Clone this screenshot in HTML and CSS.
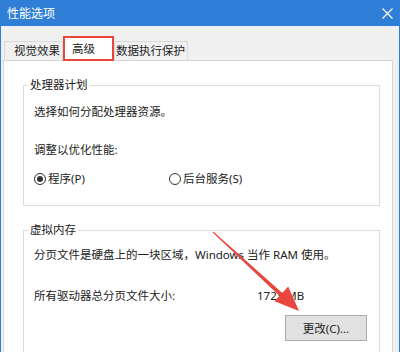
FILE: index.html
```html
<!DOCTYPE html>
<html lang="zh-CN">
<head>
    <meta charset="UTF-8">
    <meta name="viewport" content="width=device-width, initial-scale=1.0">
    <title>性能选项</title>
    <link rel="stylesheet" href="styles.css">
</head>
<body>
    <div class="window">
        <div class="titlebar">
            <span class="title">性能选项</span>
            <svg class="close" width="11" height="11" viewBox="0 0 11 11">
                <path d="M0.5 0.5 L10.5 10.5 M10.5 0.5 L0.5 10.5" stroke="#fff" stroke-width="1.2" fill="none"/>
            </svg>
        </div>
        <div class="content">
            <div class="tabs">
                <div class="tab tab-first">视觉效果</div>
                <div class="tab active">高级</div>
                <div class="tab tab-last">数据执行保护</div>
            </div>
            <div class="panel">
                <fieldset class="group group-cpu">
                    <legend>处理器计划</legend>
                    <p class="line desc">选择如何分配处理器资源。</p>
                    <p class="line adjust">调整以优化性能:</p>
                    <div class="line radios">
                        <label class="radio"><span class="dot checked"></span>程序(P)</label>
                        <label class="radio"><span class="dot"></span>后台服务(S)</label>
                    </div>
                </fieldset>
                <fieldset class="group group-mem">
                    <legend>虚拟内存</legend>
                    <p class="line desc-mem">分页文件是硬盘上的一块区域，Windows 当作 RAM 使用。</p>
                    <div class="line size-row">
                        <span>所有驱动器总分页文件大小:</span>
                        <span>1723 MB</span>
                    </div>
                    <div class="actions">
                        <button>更改(C)...</button>
                    </div>
                </fieldset>
            </div>
        </div>
        <svg class="arrow" width="400" height="352" viewBox="0 0 400 352">
            <polygon points="212.7,232.4 213.3,231.6 283.4,293.9 280.6,297.1" fill="#e8463e"/>
            <polygon points="299,311 274.6,301.2 288.2,286.4" fill="#e8463e"/>
        </svg>
    </div>
</body>
</html>
```

FILE: styles.css
```css
body {
    margin: 0;
    font-family: "Noto Sans", "Noto Sans CJK SC", sans-serif;
    font-size: 11.5px;
    color: #222;
}
.window {
    position: relative;
    width: 400px;
    height: 352px;
    box-sizing: border-box;
    border-left: 1px solid #2f7fd6;
    border-right: 1px solid #2f7fd6;
    background-color: #f0f0f0;
    overflow: hidden;
}
.titlebar {
    height: 26px;
    display: flex;
    align-items: center;
    justify-content: space-between;
    padding: 0 6px 0 6px;
    background-color: #2f7fd6;
    color: white;
    font-size: 12px;
}
.close {
    margin-top: 1px;
}
.content {
    padding: 10px 6px 0 2px;
}
.tabs {
    display: flex;
    align-items: flex-start;
    margin-left: 1px;
    position: relative;
    z-index: 1;
}
.tab {
    margin-top: 5px;
    height: 19px;
    box-sizing: border-box;
    border: 1px solid #dadada;
    border-bottom: none;
    line-height: 18px;
    background-color: #f0f0f0;
    white-space: nowrap;
}
.tab-first {
    padding: 0 2px 0 9px;
}
.tab-last {
    padding: 0 2px 0 1px;
}
.tab.active {
    margin-top: 0;
    margin-bottom: -1px;
    height: 25px;
    border: 2px solid #e8453c;
    padding: 0 17px 0 7px;
    line-height: 21px;
    background-color: white;
}
.panel {
    height: 300px;
    background-color: white;
    border: 1px solid #d9d9d9;
}
.group {
    margin: 16px 12px 0 19px;
    padding: 0 0 0 4px;
    border: 1px solid #dcdcdc;
    min-width: 0;
}
.group legend {
    padding: 0 2px;
    line-height: 16px;
}
.line {
    margin: 0;
    padding-left: 6px;
    line-height: 16px;
}
.group-cpu {
    padding-bottom: 18px;
}
.desc {
    margin-top: 11px;
}
.adjust {
    margin-top: 22px;
}
.radios {
    margin-top: 13px;
    display: grid;
    grid-template-columns: 135px auto;
}
.radio {
    display: flex;
    align-items: center;
    gap: 2px;
}
.dot {
    width: 12px;
    height: 12px;
    box-sizing: border-box;
    border: 1px solid #333;
    border-radius: 50%;
    display: inline-flex;
    align-items: center;
    justify-content: center;
}
.dot.checked::after {
    content: "";
    width: 6px;
    height: 6px;
    border-radius: 50%;
    background-color: #333;
}
.desc-mem {
    margin-top: 9px;
}
.size-row {
    margin-top: 25px;
    display: grid;
    grid-template-columns: 223px auto;
}
.actions {
    margin-top: 11px;
    display: flex;
    justify-content: flex-end;
    padding-right: 12px;
    padding-bottom: 20px;
}
button {
    width: 82px;
    height: 26px;
    padding: 0;
    border: 1px solid #adadad;
    background-color: #e1e1e1;
    font-family: inherit;
    font-size: 11.5px;
    color: #222;
}
.arrow {
    position: absolute;
    top: 0;
    left: -1px;
    pointer-events: none;
}
```
